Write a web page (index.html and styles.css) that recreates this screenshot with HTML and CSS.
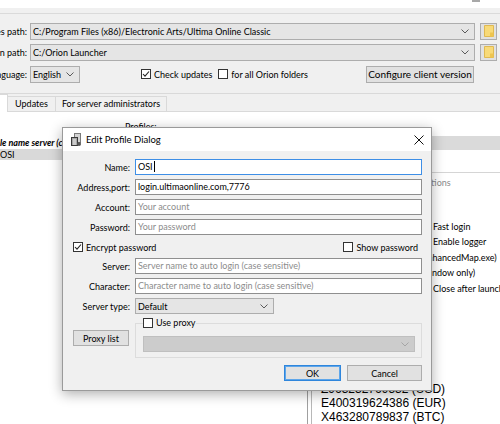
FILE: index.html
```html
<!DOCTYPE html>
<html lang="en">
<head>
    <meta charset="UTF-8">
    <meta name="viewport" content="width=device-width, initial-scale=1.0">
    <title>Orion Launcher</title>
    <link rel="stylesheet" href="styles.css">
</head>
<body>
    <div class="launcher">
        <div class="caption">
            <span class="caption-title">Orion Launcher</span>
            <span class="caption-min"></span>
        </div>
        <div class="strip"></div>

        <div class="paths">
            <div class="path-row">
                <span class="path-label">UO data files path:</span>
                <div class="combo combo-wide">
                    <span>C:/Program Files (x86)/Electronic Arts/Ultima Online Classic</span>
                    <svg class="chevron" width="8" height="5" viewBox="0 0 8 5"><path d="M0.5 0.5 L4 4 L7.5 0.5"/></svg>
                </div>
                <button class="folder-btn">
                    <svg width="10" height="12" viewBox="0 0 10 12"><path d="M0.5 0.5 H9.5 V11.5 H0.5 Z" fill="#f8da78" stroke="#dfb952"/><path d="M6 7.5 H9.5 V11.5 H6 Z" fill="#eec550"/></svg>
                </button>
            </div>
            <div class="path-row">
                <span class="path-label">Orion path:</span>
                <div class="combo combo-wide">
                    <span>C:/Orion Launcher</span>
                    <svg class="chevron" width="8" height="5" viewBox="0 0 8 5"><path d="M0.5 0.5 L4 4 L7.5 0.5"/></svg>
                </div>
                <button class="folder-btn">
                    <svg width="10" height="12" viewBox="0 0 10 12"><path d="M0.5 0.5 H9.5 V11.5 H0.5 Z" fill="#f8da78" stroke="#dfb952"/><path d="M6 7.5 H9.5 V11.5 H6 Z" fill="#eec550"/></svg>
                </button>
            </div>
            <div class="path-row lang-row">
                <span class="path-label">Language:</span>
                <div class="combo combo-lang">
                    <span>English</span>
                    <svg class="chevron" width="8" height="5" viewBox="0 0 8 5"><path d="M0.5 0.5 L4 4 L7.5 0.5"/></svg>
                </div>
                <label class="check check-updates">
                    <span class="box checked"><svg width="8" height="8" viewBox="0 0 8 8"><path d="M1 4 L3 6.2 L7 1.5"/></svg></span>
                    Check updates
                </label>
                <label class="check check-all">
                    <span class="box"></span>
                    for all Orion folders
                </label>
                <button class="btn btn-config">Configure client version</button>
            </div>
        </div>

        <div class="rule"></div>

        <div class="tabs">
            <div class="tab tab-active"><span>Launcher</span></div>
            <div class="tab tab-updates">Updates</div>
            <div class="tab tab-admins">For server administrators</div>
        </div>

        <div class="page">
            <div class="profiles">
                <div class="profiles-title">Profiles:</div>
                <div class="profile-list">
                    <div class="profile-head">Profile name server (client)</div>
                    <div class="profile-row selected">OSI</div>
                </div>
            </div>

            <div class="side">
                <div class="side-band"></div>
                <div class="side-group">
                    <div class="side-group-title">Options</div>
                    <div class="opts">
                        <label class="opt"><span class="box"></span>Fast login</label>
                        <label class="opt"><span class="box"></span>Enable logger</label>
                        <label class="opt opt-map"><span class="box"></span>Run with EnhancedMap (EnhancedMap.exe)</label>
                        <label class="opt opt-top"><span class="box"></span>Always on top (window only)</label>
                        <label class="opt"><span class="box"></span>Close after launch</label>
                    </div>
                </div>
                <div class="donate">
                    <div class="donate-text">
                        <div>If you like Orion,</div>
                        <div>please support us</div>
                        <div>with a donation.</div>
                        <div>WebMoney:</div>
                        <div>Z963232769532 (USD)</div>
                        <div>E400319624386 (EUR)</div>
                        <div>X463280789837 (BTC)</div>
                    </div>
                </div>
            </div>
        </div>
    </div>

    <!-- profile editor, opened over the launcher -->
    <div class="dialog">
        <div class="dialog-title">
            <svg class="dialog-icon" width="12" height="14" viewBox="0 0 12 14">
                <rect x="4.5" y="0.5" width="6" height="9" fill="#d4d4d4" stroke="#7a7a7a"/>
                <rect x="1.5" y="4.5" width="6" height="8" fill="#a8a8a8" stroke="#3a3a3a"/>
                <path d="M3 7 H6 M3 9 H6 M3 11 H6" stroke="#f0f0f0"/>
                <circle cx="9" cy="11" r="2" fill="#555"/>
            </svg>
            <span>Edit Profile Dialog</span>
            <svg class="dialog-close" width="10" height="10" viewBox="0 0 10 10"><path d="M0.5 0.5 L9.5 9.5 M9.5 0.5 L0.5 9.5"/></svg>
        </div>

        <div class="dialog-body">
            <div class="field">
                <span class="field-label">Name:</span>
                <div class="input focused">OSI<span class="caret"></span></div>
            </div>
            <div class="field">
                <span class="field-label">Address,port:</span>
                <div class="input">login.ultimaonline.com,7776</div>
            </div>
            <div class="field">
                <span class="field-label">Account:</span>
                <div class="input placeholder">Your account</div>
            </div>
            <div class="field">
                <span class="field-label">Password:</span>
                <div class="input placeholder">Your password</div>
            </div>

            <div class="check-row">
                <label class="check">
                    <span class="box checked"><svg width="8" height="8" viewBox="0 0 8 8"><path d="M1 4 L3 6.2 L7 1.5"/></svg></span>
                    Encrypt password
                </label>
                <label class="check check-show">
                    <span class="box"></span>
                    Show password
                </label>
            </div>

            <div class="field field-server">
                <span class="field-label">Server:</span>
                <div class="input placeholder">Server name to auto login (case sensitive)</div>
            </div>
            <div class="field">
                <span class="field-label">Character:</span>
                <div class="input placeholder">Character name to auto login (case sensitive)</div>
            </div>
            <div class="field">
                <span class="field-label">Server type:</span>
                <div class="combo combo-type">
                    <span>Default</span>
                    <svg class="chevron" width="8" height="5" viewBox="0 0 8 5"><path d="M0.5 0.5 L4 4 L7.5 0.5"/></svg>
                </div>
            </div>

            <div class="proxy-row">
                <button class="btn proxy-btn">Proxy list</button>
                <fieldset class="proxy-group">
                    <legend>
                        <label class="check"><span class="box"></span>Use proxy</label>
                    </legend>
                    <div class="combo combo-disabled">
                        <span></span>
                        <svg class="chevron" width="8" height="5" viewBox="0 0 8 5"><path d="M0.5 0.5 L4 4 L7.5 0.5"/></svg>
                    </div>
                </fieldset>
            </div>

            <div class="actions">
                <button class="btn btn-default btn-ok">OK</button>
                <button class="btn btn-cancel">Cancel</button>
            </div>
        </div>
    </div>
</body>
</html>
```

FILE: styles.css
```css
* {
    box-sizing: border-box;
}
body {
    margin: 0;
    width: 500px;
    height: 424px;
    overflow: hidden;
    position: relative;
    background: #fff;
    font-family: Lato, "Liberation Sans", sans-serif;
    font-size: 9px;
    color: #000;
}
button {
    font: inherit;
    color: #000;
}

/* main launcher window, its left part is off screen */
.launcher {
    margin-left: -60px;
    width: 560px;
    height: 424px;
    background: #f0f0f0;
    display: flex;
    flex-direction: column;
}
.caption {
    height: 9px;
    background: #fff;
    position: relative;
    overflow: hidden;
}
.caption-title {
    display: block;
    margin-top: -10px;
    padding-left: 50px;
    line-height: 12px;
    color: #888;
}
.caption-min {
    position: absolute;
    left: 532px;
    top: 0;
    width: 8px;
    height: 2px;
    background: #a8a8a8;
}
.strip {
    height: 6px;
    border-bottom: 1px solid #dadada;
}

.paths {
    padding: 9px 3px 0 0;
    display: flex;
    flex-direction: column;
    gap: 4px;
}
.path-row {
    display: flex;
    align-items: center;
    height: 17px;
}
.lang-row {
    margin-top: 1px;
}
.path-label {
    width: 87px;
    flex-shrink: 0;
    text-align: right;
    white-space: nowrap;
    overflow: hidden;
}

.combo {
    display: flex;
    align-items: center;
    justify-content: space-between;
    height: 17px;
    padding: 0 5px 0 2px;
    border: 1px solid #adadad;
    background: #e5e5e5;
    white-space: nowrap;
}
.chevron {
    flex-shrink: 0;
    fill: none;
    stroke: #5a5a5a;
}
.combo-wide {
    flex: 1;
    margin-left: 3px;
}
.combo-lang {
    width: 50px;
    margin-left: 3px;
}
.folder-btn {
    width: 17px;
    height: 17px;
    margin-left: 5px;
    padding: 0;
    border: 1px solid #adadad;
    background: #e1e1e1;
    display: flex;
    align-items: center;
    justify-content: center;
}

.check {
    display: flex;
    align-items: center;
    gap: 3px;
    white-space: nowrap;
}
.box {
    width: 10px;
    height: 10px;
    flex-shrink: 0;
    border: 1px solid #333;
    background: #fff;
    display: flex;
    align-items: center;
    justify-content: center;
}
.box svg {
    fill: none;
    stroke: #222;
    stroke-width: 1.1;
}
.check-updates {
    margin-left: 61px;
}
.check-all {
    margin-left: 6px;
}

.btn {
    height: 16px;
    padding: 0;
    border: 1px solid #adadad;
    background: #e1e1e1;
}
.btn-config {
    width: 108px;
    height: 17px;
    margin-left: auto;
    margin-right: 23px;
    font-size: 10px;
}

.rule {
    margin-top: 10px;
    height: 1px;
    background: #d9d9d9;
}

/* tab bar */
.tabs {
    display: flex;
    align-items: flex-end;
    height: 17px;
}
.tab {
    height: 15px;
    border: 1px solid #d9d9d9;
    border-bottom: none;
    background: #f0f0f0;
    line-height: 14px;
    text-align: center;
    white-space: nowrap;
}
.tab-active {
    width: 68px;
    height: 18px;
    margin-bottom: -1px;
    background: #fff;
    position: relative;
    text-align: left;
    padding-left: 10px;
}
.tab-updates {
    width: 49px;
    margin-left: -1px;
}
.tab-admins {
    width: 112px;
    margin-left: -1px;
}

.page {
    flex: 1;
    display: flex;
    background: #fff;
    border-top: 1px solid #d9d9d9;
}

.profiles {
    width: 360px;
    flex-shrink: 0;
}
.profiles-title {
    margin-top: 9px;
    line-height: 11px;
    padding-left: 185px;
}
.profile-list {
    margin-top: 5px;
}
.profile-head {
    height: 12px;
    line-height: 12px;
    padding-left: 42px;
    font-weight: bold;
    font-style: italic;
    white-space: nowrap;
}
.profile-row {
    height: 11px;
    line-height: 11px;
    padding-left: 60px;
}
.profile-row.selected {
    background: #d9d9d9;
}

.side {
    flex: 1;
    margin-left: 7px;
    display: flex;
    flex-direction: column;
}
.side-band {
    margin-top: 24px;
    height: 14px;
    background: #dadada;
}
.side-group {
    margin-top: 22px;
    border-top: 1px solid #d5d5d5;
}
.side-group-title {
    margin-top: 4px;
    padding-left: 112px;
    line-height: 12px;
    color: #8a8a8a;
}
.opts {
    margin-top: 30px;
}
.opt {
    height: 15.5px;
    display: flex;
    align-items: center;
    gap: 3px;
    padding-left: 113px;
    white-space: nowrap;
}
.opt-map {
    padding-left: 4px;
}
.opt-top {
    padding-left: 42px;
}

.donate {
    flex: 1;
    margin-top: 20px;
    border-left: 1px solid #a0a0a0;
}
.donate-text {
    height: 100%;
    margin-left: 3px;
    padding: 10px 0 0 9px;
    border-left: 1px solid #b8b8b8;
    font-family: "Liberation Sans", Arial, sans-serif;
    font-size: 12px;
    line-height: 14px;
    white-space: nowrap;
}

/* edit profile dialog */
.dialog {
    position: absolute;
    left: 62px;
    top: 127px;
    width: 370px;
    height: 264px;
    border: 1px solid #9a9a9a;
    background: #f0f0f0;
    box-shadow: 0 3px 12px rgba(0, 0, 0, 0.32);
    display: flex;
    flex-direction: column;
}
.dialog-title {
    height: 23px;
    flex-shrink: 0;
    background: #fff;
    display: flex;
    align-items: center;
    padding: 0 7px;
    font-size: 9.5px;
}
.dialog-icon {
    margin-right: 4px;
}
.dialog-close {
    margin-left: auto;
    fill: none;
    stroke: #111;
}

.dialog-body {
    flex: 1;
    padding: 8px 9px 0 0;
    display: flex;
    flex-direction: column;
    gap: 4px;
}
.field {
    display: grid;
    grid-template-columns: 67px 1fr;
    column-gap: 5px;
    align-items: center;
    height: 16px;
}
.field-label {
    text-align: right;
}
.field-server {
    margin-top: -1px;
}
.input {
    height: 16px;
    padding: 0 2px;
    border: 1px solid #8f8f8f;
    background: #fff;
    line-height: 14px;
    white-space: nowrap;
    overflow: hidden;
}
.input.focused {
    border-color: #3d8ee6;
}
.input.placeholder {
    color: #8c8c8c;
}
.caret {
    display: inline-block;
    width: 1px;
    height: 11px;
    margin-left: 1px;
    background: #000;
    vertical-align: -2px;
}

.check-row {
    height: 16px;
    display: flex;
    align-items: center;
    padding: 0 4px 0 10px;
}
.check-show {
    margin-left: auto;
}

.combo-type {
    width: 139px;
    height: 16px;
}

.proxy-row {
    display: grid;
    grid-template-columns: 67px 1fr;
    column-gap: 5px;
    align-items: center;
    height: 40px;
}
.proxy-btn {
    margin-left: 10px;
    width: 56px;
}
.proxy-group {
    margin: 0;
    min-width: 0;
    padding: 0 6px 5px 7px;
    border: 1px solid #dcdcdc;
}
.proxy-group legend {
    padding: 0;
    line-height: 10px;
}
.combo-disabled {
    height: 16px;
    margin-top: 8px;
    background: #cccccc;
    border-color: #bfbfbf;
}
.combo-disabled .chevron {
    stroke: #a5a5a5;
}

.actions {
    margin-top: 3px;
    display: flex;
    justify-content: flex-end;
    gap: 6px;
}
.btn-ok {
    width: 57px;
}
.btn-cancel {
    width: 75px;
}
.btn-default {
    border-color: #2f86dc;
    box-shadow: inset 0 0 0 1px #5ea6ea;
}
```
